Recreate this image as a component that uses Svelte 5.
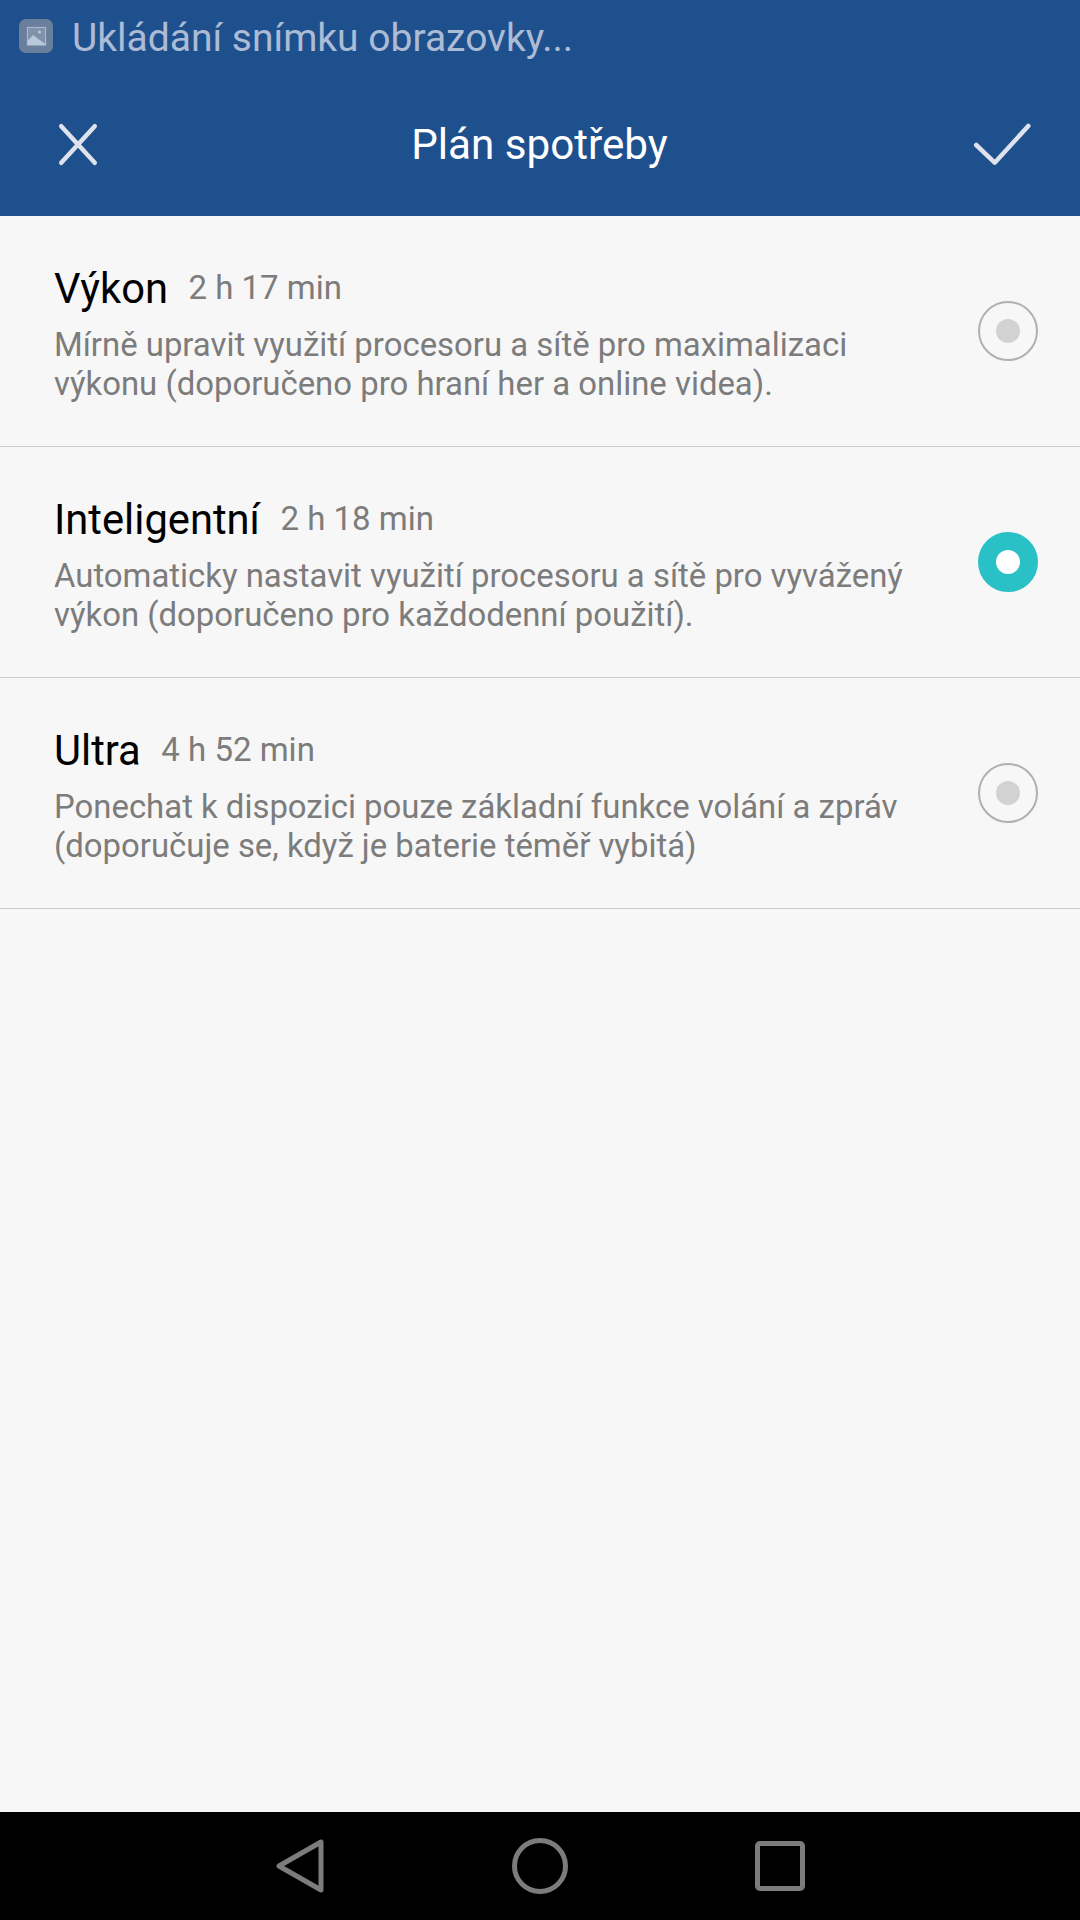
<script>
  const plans = [
    { name: 'Výkon', time: '2 h 17 min', lines: ['Mírně upravit využití procesoru a sítě pro maximalizaci', 'výkonu (doporučeno pro hraní her a online videa).'], active: false },
    { name: 'Inteligentní', time: '2 h 18 min', lines: ['Automaticky nastavit využití procesoru a sítě pro vyvážený', 'výkon (doporučeno pro každodenní použití).'], active: true },
    { name: 'Ultra', time: '4 h 52 min', lines: ['Ponechat k dispozici pouze základní funkce volání a zpráv', '(doporučuje se, když je baterie téměř vybitá)'], active: false }
  ];
</script>

<div class="screen">
  <header class="top">
    <div class="status">
      <svg class="shot-icon" width="34" height="34" viewBox="0 0 34 34">
        <rect width="34" height="34" rx="7" fill="#6a7f9c" />
        <rect x="8.5" y="8.5" width="18" height="17.5" fill="#7f92ab" stroke="#a9b8cc" stroke-width="1.2" />
        <path d="M8.5 22 L14 16 L20 20.5 L26.5 25 V26 H8.5 Z" fill="#b9c7da" />
        <circle cx="20.5" cy="13" r="1.6" fill="#b9c7da" />
      </svg>
      <span>Ukládání snímku obrazovky...</span>
    </div>
    <div class="toolbar">
      <svg width="42" height="45" viewBox="0 0 42 45">
        <path d="M4.25 4.25 L37.75 40.75 M37.75 4.25 L4.25 40.75" stroke="#dde2ed" stroke-width="4.5" stroke-linecap="round" fill="none" />
      </svg>
      <h1>Plán spotřeby</h1>
      <svg width="60" height="45" viewBox="0 0 60 45">
        <path d="M4.2 23 L22.7 40.7 L56.3 4" stroke="#dde2ed" stroke-width="4.5" stroke-linecap="round" stroke-linejoin="round" fill="none" />
      </svg>
    </div>
  </header>

  <main class="list">
    {#each plans as plan}
      <div class="row">
        <div class="info">
          <div class="head">
            <span class="name">{plan.name}</span>
            <span class="time">{plan.time}</span>
          </div>
          <p class="desc">{plan.lines[0]}<br />{plan.lines[1]}</p>
        </div>
        <span class="radio" class:active={plan.active}></span>
      </div>
    {/each}
  </main>

  <footer class="nav">
    <svg width="48" height="54" viewBox="0 0 48 54">
      <path d="M45 3 V51 L3 27 Z" stroke="#7c7c7c" stroke-width="5" stroke-linejoin="round" fill="none" />
    </svg>
    <svg class="home" width="56" height="56" viewBox="0 0 56 56">
      <circle cx="28" cy="28" r="25.5" stroke="#7c7c7c" stroke-width="5" fill="none" />
    </svg>
    <svg width="50" height="50" viewBox="0 0 50 50">
      <rect x="2.5" y="2.5" width="45" height="45" rx="2.5" stroke="#7c7c7c" stroke-width="5" fill="none" />
    </svg>
  </footer>
</div>

<style>
  :global(body) {
    margin: 0;
    background: #f7f7f7;
  }

  .screen {
    width: 1080px;
    height: 1920px;
    display: flex;
    flex-direction: column;
    font-family: Roboto, "Liberation Sans", sans-serif;
    background: #f7f7f7;
  }

  .top {
    height: 216px;
    background: #1f508e;
    flex: none;
  }

  .status {
    height: 73px;
    padding: 19px 0 0 19px;
    box-sizing: border-box;
    display: flex;
    align-items: flex-start;
    gap: 19px;
    color: #acbcd5;
    font-size: 39px;
    line-height: 38px;
  }

  .shot-icon {
    flex: none;
  }

  .toolbar {
    height: 143px;
    padding: 0 48px 0 57px;
    display: flex;
    align-items: center;
    justify-content: space-between;
  }

  h1 {
    margin: 0;
    padding-left: 8px;
    flex: 1;
    text-align: center;
    font-size: 42.2px;
    font-weight: 400;
    color: #fff;
  }

  .list {
    flex: 1;
  }

  .row {
    height: 231px;
    box-sizing: border-box;
    border-bottom: 1.5px solid #cacaca;
    padding: 4px 42px 0 54px;
    display: flex;
    align-items: center;
    justify-content: space-between;
  }

  .head {
    display: flex;
    align-items: center;
    gap: 20.5px;
    margin-bottom: 12px;
  }

  .name {
    font-size: 41.7px;
    color: #000;
  }

  .time {
    font-size: 33px;
    color: #7c7c7c;
    margin-bottom: 2px;
  }

  .desc {
    margin: 0;
    font-size: 32.9px;
    line-height: 39px;
    color: #7c7c7c;
  }

  .radio {
    flex: none;
    width: 60px;
    height: 60px;
    margin-top: -4px;
    box-sizing: border-box;
    border-radius: 50%;
    border: 2px solid #b0b0b0;
    display: flex;
    align-items: center;
    justify-content: center;
  }

  .radio::after {
    content: '';
    width: 24px;
    height: 24px;
    border-radius: 50%;
    background: #d2d2d2;
  }

  .radio.active {
    background: #29c1c6;
    border-color: #29c1c6;
  }

  .radio.active::after {
    background: #fff;
  }

  .nav {
    height: 108px;
    flex: none;
    background: #000;
    display: flex;
    align-items: center;
    justify-content: center;
    gap: 187px;
  }

  .home {
    margin-left: 1px;
  }
</style>
